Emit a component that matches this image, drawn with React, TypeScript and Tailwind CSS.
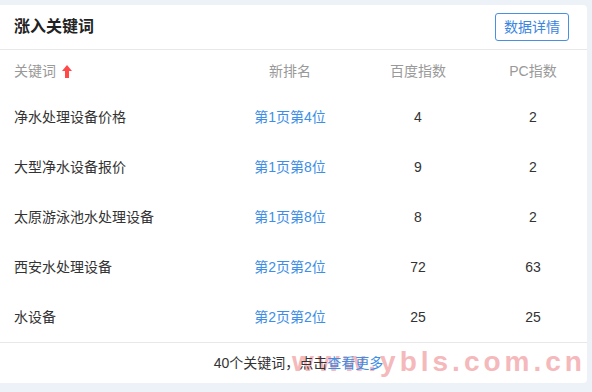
import React from 'react';

const rows = [
  { kw: '净水处理设备价格', rank: '第1页第4位', baidu: '4', pc: '2' },
  { kw: '大型净水设备报价', rank: '第1页第8位', baidu: '9', pc: '2' },
  { kw: '太原游泳池水处理设备', rank: '第1页第8位', baidu: '8', pc: '2' },
  { kw: '西安水处理设备', rank: '第2页第2位', baidu: '72', pc: '63' },
  { kw: '水设备', rank: '第2页第2位', baidu: '25', pc: '25' },
];

const font = { fontFamily: '"Liberation Sans", "Noto Sans CJK SC", sans-serif' };

export default function App() {
  return (
    <div className="w-[592px] h-[392px] bg-[#edf2f8] pt-[5px] pr-[5px] pb-[9px] overflow-hidden" style={font}>
      <div className="w-[587px] h-[378px] bg-white rounded-r-[4px] flex flex-col">
        {/* header */}
        <div className="h-[45px] flex items-center justify-between pl-[14px] pr-[18px] border-b border-[#e8e8e8] shrink-0">
          <span className="text-[16px] font-bold text-[#222]">涨入关键词</span>
          <button className="h-[28px] w-[74px] border border-[#4a90e2] rounded-[3px] text-[14px] text-[#3a86e0] flex items-center justify-center">
            数据详情
          </button>
        </div>

        {/* table head */}
        <div className="grid grid-cols-[223px_134px_122px_108px] h-[42px] items-center text-[14px] text-[#999] shrink-0">
          <div className="pl-[14px] flex items-center gap-[6px]">
            <span>关键词</span>
            <svg width="10" height="13" viewBox="0 0 10 13">
              <path d="M5 0 L10 6 L7 6 L7 13 L3 13 L3 6 L0 6 Z" fill="#ff4a4a" />
            </svg>
          </div>
          <div className="text-center">新排名</div>
          <div className="text-center">百度指数</div>
          <div className="text-center">PC指数</div>
        </div>

        {/* rows */}
        <div className="border-b border-[#e8e8e8] shrink-0">
          {rows.map((r) => (
            <div key={r.kw} className="grid grid-cols-[223px_134px_122px_108px] h-[50px] items-center text-[14px] text-[#333]">
              <div className="pl-[14px]">{r.kw}</div>
              <div className="text-center text-[#3d8ee6]">{r.rank}</div>
              <div className="text-center">{r.baidu}</div>
              <div className="text-center">{r.pc}</div>
            </div>
          ))}
        </div>

        {/* footer */}
        <div className="relative flex-1 flex items-center justify-center text-[14px] text-[#333]">
          <span className="absolute left-[292px] top-[-2px] text-[28px] font-semibold tracking-[4px] text-[#f5b8bb] whitespace-nowrap">
            www.ybls.com.cn
          </span>
          <span className="relative ml-[10px]">
            40个关键词，点击<span className="text-[#3d8ee6]">查看更多</span>
          </span>
        </div>
      </div>
    </div>
  );
}
